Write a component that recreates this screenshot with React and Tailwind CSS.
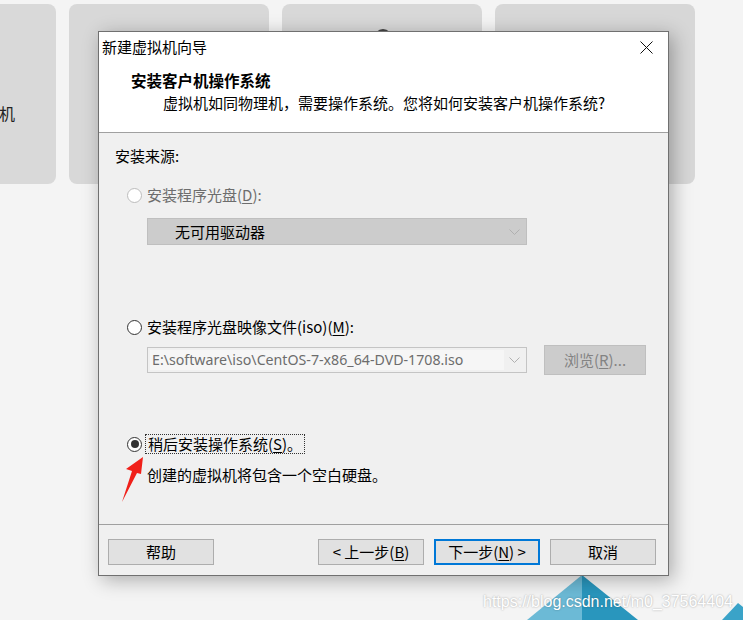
import React from "react";

const cjk = "font-['Microsoft_YaHei','Noto_Sans_CJK_SC',sans-serif]";

function Radio({ state }) {
  if (state === "disabled") {
    return <span className="w-[15px] h-[15px] rounded-full border border-[#bcbcbc] bg-white shrink-0" />;
  }
  return (
    <span className="w-[15px] h-[15px] rounded-full border border-[#333333] bg-white shrink-0 flex items-center justify-center">
      {state === "checked" && <span className="w-[8px] h-[8px] rounded-full bg-[#333333]" />}
    </span>
  );
}

function Chevron({ color }) {
  return (
    <svg width="11" height="6" viewBox="0 0 11 6" className="shrink-0">
      <path d="M0.5 0.5 L5.5 5.5 L10.5 0.5" fill="none" stroke={color} strokeWidth="1" />
    </svg>
  );
}

function Btn({ children, focused }) {
  return (
    <button
      className={`w-[106px] h-[26px] bg-[#e1e1e1] text-[15px] text-black flex items-center justify-center ${
        focused ? "border-2 border-[#0078d7]" : "border border-[#adadad]"
      }`}
    >
      {children}
    </button>
  );
}

export default function App() {
  return (
    <div className={`relative w-[743px] h-[620px] overflow-hidden bg-[#f4f4f4] ${cjk}`}>
      {/* background cards */}
      <div className="flex gap-[13px] pt-[4px] ml-[-144px]">
        <div className="w-[200px] h-[180px] rounded-[8px] bg-[#d9d9d9] flex justify-end pt-[97px]">
          <span className="text-[16px] leading-[24px] text-[#222] pr-[41px]">机</span>
        </div>
        <div className="w-[200px] h-[180px] rounded-[8px] bg-[#d8d8d8]" />
        <div className="w-[200px] h-[180px] rounded-[8px] bg-[#d8d8d8] flex justify-center pt-[25px]">
          <span className="w-[18px] h-[18px] rounded-full bg-[#444] ml-[2px]" />
        </div>
        <div className="w-[200px] h-[180px] rounded-[8px] bg-[#d7d7d7]" />
      </div>

      {/* bottom-right decoration */}
      <svg className="absolute left-0 top-0" width="743" height="620" viewBox="0 0 743 620">
        <polygon points="582,575 582,620 527,620" fill="#6cbad6" />
        <polygon points="582,575 638,620 582,620" fill="#2996bd" />
        <polygon points="738,603 743,607 743,620 722,620" fill="#3aa3c8" />
      </svg>

      <span className="absolute left-[483px] top-[590px] text-[16px] text-white font-['Liberation_Sans',sans-serif] [text-shadow:0_0_2px_rgba(0,0,0,0.35)]">
        https://blog.csdn.net/m0_37564404
      </span>

      {/* dialog */}
      <div className="absolute left-[98px] top-[31px] w-[571px] h-[545px] border border-[#707070] bg-[#f0f0f0] flex flex-col shadow-[4px_4px_18px_rgba(0,0,0,0.3)]">
        <div className="bg-white border-b border-[#a0a0a0]">
          <div className="h-[30px] flex items-center justify-between pl-[3px] pr-[15px]">
            <span className="text-[15px] text-black">新建虚拟机向导</span>
            <svg width="13" height="13" viewBox="0 0 13 13">
              <path d="M0.5 0.5 L12.5 12.5 M12.5 0.5 L0.5 12.5" stroke="#111" strokeWidth="1" />
            </svg>
          </div>
          <div className="pl-[32px] mt-[8px] text-[15.5px] leading-[20px] font-bold text-black">安装客户机操作系统</div>
          <div className="pl-[64px] mt-[3px] mb-[19px] text-[15px] leading-[20px] text-black">
            虚拟机如同物理机，需要操作系统。您将如何安装客户机操作系统?
          </div>
        </div>

        <div className="flex-1 flex flex-col pl-[16px] pt-[13px] text-[15px] leading-[20px] text-black">
          <div>安装来源:</div>

          <div className="mt-[19px] ml-[12px] flex items-center gap-[5px] text-[#6d6d6d]">
            <Radio state="disabled" />
            <span>
              安装程序光盘(<span className="underline underline-offset-2">D</span>):
            </span>
          </div>

          <div className="mt-[13px] ml-[32px] w-[380px] h-[27px] bg-[#cccccc] border border-[#bfbfbf] flex items-center justify-between pl-[27px] pr-[6px]">
            <span>无可用驱动器</span>
            <Chevron color="#b0b0b0" />
          </div>

          <div className="mt-[72px] ml-[12px] flex items-center gap-[5px]">
            <Radio state="unchecked" />
            <span>
              安装程序光盘映像文件(iso)(<span className="underline underline-offset-2">M</span>):
            </span>
          </div>

          <div className="mt-[8px] ml-[32px] flex items-center gap-[17px]">
            <div className="w-[380px] h-[26px] border border-[#c4c4c4] bg-[#f0f0f0] flex items-center pl-[2px] pr-[6px]">
              <div className="w-[354px] h-[20px] bg-[#f6f6f6] flex items-center pl-[2px] text-[#6d6d6d] font-['Noto_Sans',sans-serif] text-[14.2px]">
                E:\software\iso\CentOS-7-x86_64-DVD-1708.iso
              </div>
              <div className="flex-1 flex justify-end">
                <Chevron color="#b0b0b0" />
              </div>
            </div>
            <div className="w-[102px] h-[30px] bg-[#cccccc] border border-[#bfbfbf] flex items-center justify-center text-[#838383]">
              浏览(<span className="underline underline-offset-2">R</span>)...
            </div>
          </div>

          <div className="mt-[59px] ml-[12px] flex items-center gap-[3px]">
            <Radio state="checked" />
            <span className="px-[2px] h-[20px] border border-dotted border-[#333] flex items-center">
              稍后安装操作系统(<span className="underline underline-offset-2">S</span>)。
            </span>
          </div>

          <div className="mt-[11px] ml-[32px]">创建的虚拟机将包含一个空白硬盘。</div>
        </div>

        <div className="border-t border-[#a0a0a0] h-[51px] flex items-start pt-[14px] pl-[9px] pr-[12px] gap-[10px]">
          <Btn>帮助</Btn>
          <div className="flex-1" />
          <Btn>
            &lt; 上一步(<span className="underline underline-offset-2">B</span>)
          </Btn>
          <Btn focused>
            下一步(<span className="underline underline-offset-2">N</span>) &gt;
          </Btn>
          <Btn>取消</Btn>
        </div>
      </div>

      {/* red arrow annotation */}
      <svg className="absolute left-0 top-0 pointer-events-none" width="743" height="620" viewBox="0 0 743 620">
        <polygon points="143,457 126,469 132,471 122,502 137,473 141,474" fill="#f0201a" />
      </svg>
    </div>
  );
}
